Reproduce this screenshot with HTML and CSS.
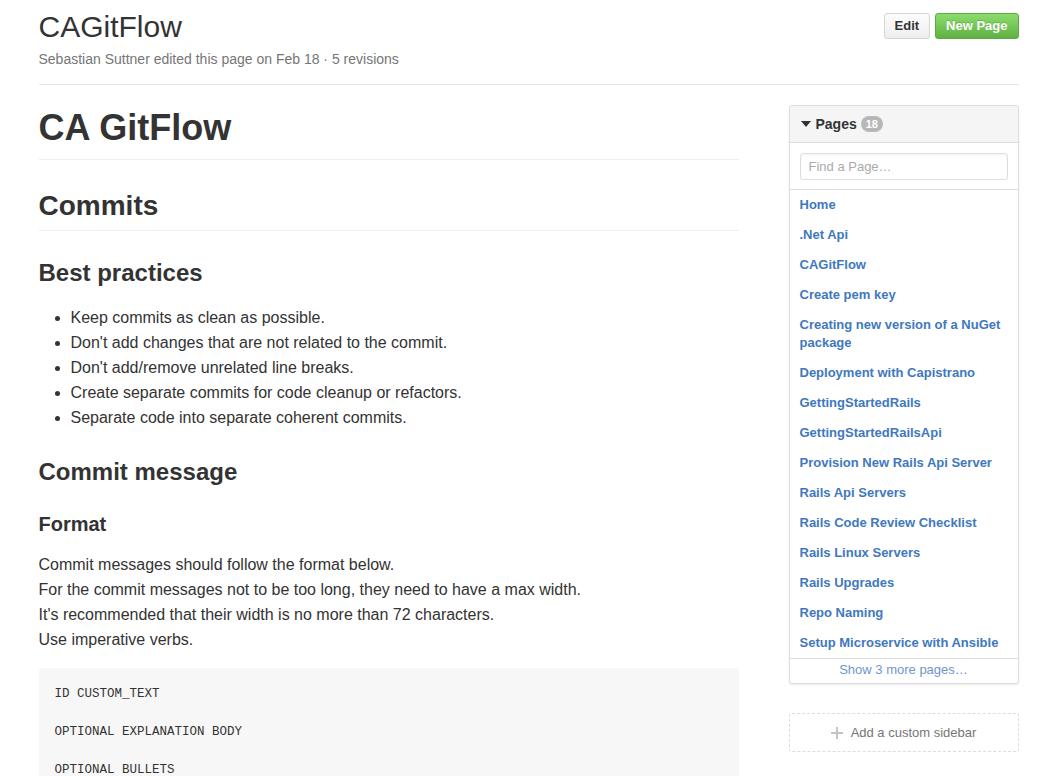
FILE: index.html
```html
<!DOCTYPE html>
<html lang="en">
<head>
<meta charset="utf-8">
<title>CAGitFlow</title>
<link rel="stylesheet" href="styles.css">
</head>
<body>
<div class="container">
  <div class="gh-header">
    <div class="gh-header-text">
      <h1 class="gh-title">CAGitFlow</h1>
      <div class="gh-meta">Sebastian Suttner edited this page on Feb 18 · 5 revisions</div>
    </div>
    <div class="gh-actions">
      <a class="btn btn-default">Edit</a>
      <a class="btn btn-primary">New Page</a>
    </div>
  </div>

  <div class="wiki-layout">
    <div class="markdown-body">
      <h1>CA GitFlow</h1>
      <h2>Commits</h2>
      <h3>Best practices</h3>
      <ul>
        <li>Keep commits as clean as possible.</li>
        <li>Don't add changes that are not related to the commit.</li>
        <li>Don't add/remove unrelated line breaks.</li>
        <li>Create separate commits for code cleanup or refactors.</li>
        <li>Separate code into separate coherent commits.</li>
      </ul>
      <h3>Commit message</h3>
      <h4>Format</h4>
      <p>Commit messages should follow the format below.<br>For the commit messages not to be too long, they need to have a max width.<br>It's recommended that their width is no more than 72 characters.<br>Use imperative verbs.</p>
      <pre><code>ID CUSTOM_TEXT

OPTIONAL EXPLANATION BODY

OPTIONAL BULLETS</code></pre>
    </div>

    <div class="wiki-sidebar">
      <div class="box">
        <div class="box-header">
          <svg class="caret" width="10" height="6" viewBox="0 0 10 6"><path d="M0 0h10L5 6z" fill="#333"/></svg>
          <span class="box-title">Pages</span>
          <span class="counter">18</span>
        </div>
        <div class="box-search">
          <input class="search-input" type="text" placeholder="Find a Page…">
        </div>
        <ul class="pages-list">
          <li><a>Home</a></li>
          <li><a>.Net Api</a></li>
          <li><a>CAGitFlow</a></li>
          <li><a>Create pem key</a></li>
          <li><a>Creating new version of a NuGet package</a></li>
          <li><a>Deployment with Capistrano</a></li>
          <li><a>GettingStartedRails</a></li>
          <li><a>GettingStartedRailsApi</a></li>
          <li><a>Provision New Rails Api Server</a></li>
          <li><a>Rails Api Servers</a></li>
          <li><a>Rails Code Review Checklist</a></li>
          <li><a>Rails Linux Servers</a></li>
          <li><a>Rails Upgrades</a></li>
          <li><a>Repo Naming</a></li>
          <li><a>Setup Microservice with Ansible</a></li>
        </ul>
        <div class="more-pages"><a>Show 3 more pages…</a></div>
      </div>
      <div class="custom-sidebar">
        <svg class="plus" width="12" height="12" viewBox="0 0 12 12"><path d="M5 0h2v5h5v2H7v5H5V7H0V5h5z" fill="#c4c4c4"/></svg>
        <span>Add a custom sidebar</span>
      </div>
    </div>
  </div>
</div>
</body>
</html>
```

FILE: styles.css
```css
html, body {
  margin: 0;
  padding: 0;
  background: #fff;
  overflow: hidden;
}
body {
  font-family: "Liberation Sans", Arial, Helvetica, sans-serif;
  color: #333;
  font-size: 14px;
}
.container {
  width: 980px;
  margin: 0 auto;
}
.gh-header {
  display: flex;
  justify-content: space-between;
  align-items: flex-start;
  padding-top: 9px;
  padding-bottom: 15px;
  border-bottom: 1px solid #e5e5e5;
}
.gh-title {
  margin: 0;
  font-size: 30px;
  font-weight: normal;
  line-height: 36px;
  color: #333;
}
.gh-meta {
  margin-top: 4px;
  font-size: 14px;
  line-height: 20px;
  color: #767676;
}
.gh-actions {
  display: flex;
  gap: 5px;
  margin-top: 4px;
}
.btn {
  display: inline-block;
  box-sizing: border-box;
  height: 26px;
  padding: 0 10px;
  font-size: 13px;
  font-weight: bold;
  line-height: 24px;
  border-radius: 3px;
  border: 1px solid #d5d5d5;
  cursor: pointer;
}
.btn-default {
  color: #333;
  background: linear-gradient(#fcfcfc, #eee);
}
.btn-primary {
  color: #fff;
  text-shadow: 0 -1px 0 rgba(0,0,0,0.15);
  background: linear-gradient(#8add6d, #60b044);
  border-color: #5ca941;
}
.wiki-layout {
  display: flex;
  gap: 50px;
  padding-top: 20px;
  align-items: flex-start;
}
.markdown-body {
  width: 700px;
  padding-top: 1px;
  font-size: 16px;
  line-height: 25px;
  color: #333;
}
.markdown-body h1,
.markdown-body h2,
.markdown-body h3,
.markdown-body h4 {
  font-weight: bold;
  color: #333;
}
.markdown-body h1 {
  margin: 0;
  font-size: 36px;
  line-height: 43px;
  padding-bottom: 10px;
  border-bottom: 1px solid #eee;
}
.markdown-body h2 {
  margin: 29px 0 16px;
  font-size: 28px;
  line-height: 34px;
  padding-bottom: 7px;
  border-bottom: 1px solid #eee;
}
.markdown-body h3 {
  margin: 27px 0 17px;
  font-size: 24px;
  line-height: 30px;
}
.markdown-body h4 {
  margin: 25px 0 15px;
  font-size: 20px;
  line-height: 25px;
}
.markdown-body ul {
  margin: 0 0 16px;
  padding-left: 32px;
}
.markdown-body p {
  margin: 0 0 16px;
}
.markdown-body pre {
  margin: 0;
  padding: 17px 16px 16px;
  background: #f7f7f7;
  border-radius: 3px;
  font-family: "Liberation Mono", "DejaVu Sans Mono", monospace;
  font-size: 12.5px;
  line-height: 19px;
  color: #333;
}
.markdown-body pre code {
  font: inherit;
}
.wiki-sidebar {
  width: 230px;
}
.box {
  border: 1px solid #ddd;
  border-radius: 3px;
  box-shadow: 0 1px 2px rgba(0,0,0,0.08);
  background: #fff;
}
.box-header {
  display: flex;
  align-items: center;
  padding: 10px;
  line-height: 15px;
  background: #f5f5f5;
  border-bottom: 1px solid #ddd;
  border-radius: 3px 3px 0 0;
}
.caret {
  margin: 0 5px 0 1px;
}
.box-title {
  font-size: 14px;
  font-weight: bold;
  color: #333;
}
.counter {
  margin-left: 4px;
  padding: 0 5px;
  font-size: 11px;
  font-weight: bold;
  line-height: 16px;
  color: #fff;
  background: #b8b8b8;
  border-radius: 20px;
}
.box-search {
  padding: 10px 10px 9px;
  border-bottom: 1px solid #ddd;
}
.search-input {
  display: block;
  box-sizing: border-box;
  width: 100%;
  height: 27px;
  padding: 0 8px;
  font-family: "Liberation Sans", Arial, sans-serif;
  font-size: 13px;
  color: #333;
  border: 1px solid #ddd;
  border-radius: 3px;
  box-shadow: inset 0 1px 2px rgba(0,0,0,0.05);
  outline: none;
}
.search-input::placeholder {
  color: #aaa;
}
.pages-list {
  list-style: none;
  margin: 0;
  padding: 0;
  border-bottom: 1px solid #ddd;
}
.pages-list li a {
  display: block;
  padding: 6px 10px;
  font-size: 13px;
  font-weight: bold;
  line-height: 18px;
  color: #4078c0;
}
.more-pages {
  text-align: center;
  padding: 2px 10px 4px;
  font-size: 13px;
  line-height: 18px;
}
.more-pages a {
  color: #6f95cf;
}
.custom-sidebar {
  display: flex;
  align-items: center;
  justify-content: center;
  gap: 8px;
  margin-top: 29px;
  height: 37px;
  border: 1px dashed #ddd;
  border-radius: 3px;
  font-size: 13px;
  color: #767676;
}
```
